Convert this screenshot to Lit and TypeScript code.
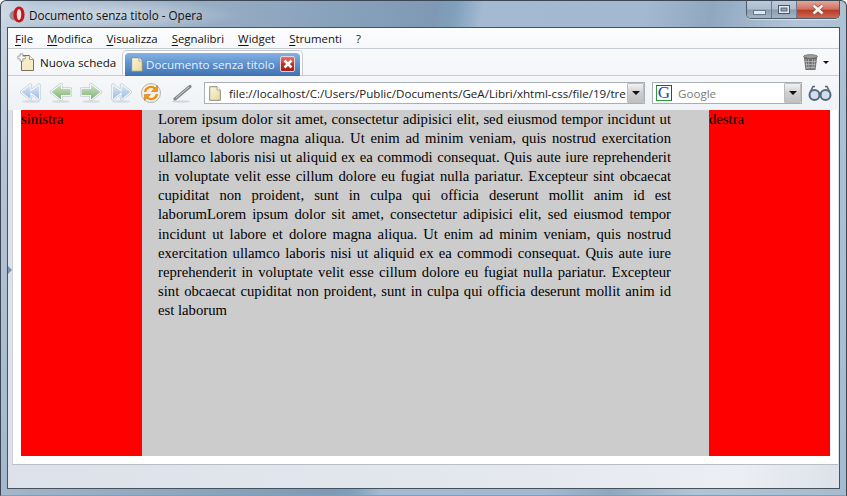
import { LitElement, html, css } from "lit";
import { customElement } from "lit/decorators.js";

const LINES = [
  "Lorem ipsum dolor sit amet, consectetur adipisici elit, sed eiusmod tempor incidunt ut",
  "labore et dolore magna aliqua. Ut enim ad minim veniam, quis nostrud exercitation",
  "ullamco laboris nisi ut aliquid ex ea commodi consequat. Quis aute iure reprehenderit",
  "in voluptate velit esse cillum dolore eu fugiat nulla pariatur. Excepteur sint obcaecat",
  "cupiditat non proident, sunt in culpa qui officia deserunt mollit anim id est",
  "laborumLorem ipsum dolor sit amet, consectetur adipisici elit, sed eiusmod tempor",
  "incidunt ut labore et dolore magna aliqua. Ut enim ad minim veniam, quis nostrud",
  "exercitation ullamco laboris nisi ut aliquid ex ea commodi consequat. Quis aute iure",
  "reprehenderit in voluptate velit esse cillum dolore eu fugiat nulla pariatur. Excepteur",
  "sint obcaecat cupiditat non proident, sunt in culpa qui officia deserunt mollit anim id",
];
const LAST = "est laborum";

const MENU: [string, string][] = [
  ["F", "ile"], ["M", "odifica"], ["V", "isualizza"], ["S", "egnalibri"], ["W", "idget"], ["S", "trumenti"], ["", "?"],
];

const page = (w = 12, h = 15) => html`<svg class="pg" width=${w} height=${h} viewBox="0 0 12 15" preserveAspectRatio="none">
  <defs><linearGradient id="pg" x1="0" y1="0" x2="1" y2="1"><stop offset="0" stop-color="#fbf5d9"/><stop offset="1" stop-color="#e6d9a4"/></linearGradient></defs>
  <path d="M.7.7h7.3l3.3 3.3v10.3H.7z" fill="url(#pg)" stroke="#8f8a76"/>
  <path d="M8 .7V4h3.3" fill="#fff" stroke="#a09a84" stroke-width=".8"/>
</svg>`;

const newTabIcon = html`<svg width="18" height="18" viewBox="0 0 18 18">
  <path d="M4.5 2.5h8l4 4v11h-12z" fill="#f5ecc6" stroke="#77735f"/>
  <path d="M12.5 2.5v4h4" fill="#fff" stroke="#8f8a76" stroke-width=".8"/>
  <path d="M.5 4.5h8M4.5.5v8" stroke="#8a8a8a" stroke-width="3.6"/>
  <path d="M1.2 4.5h6.6M4.5 1.2v6.6" stroke="#fff" stroke-width="2"/>
</svg>`;

const nav = (d: string, id: string, a: string, b: string) => html`<svg width="22" height="20" viewBox="0 0 22 20">
  <defs>
    <linearGradient id=${id} x1="0" y1="0" x2="0" y2="1"><stop offset="0" stop-color=${a}/><stop offset="1" stop-color=${b}/></linearGradient>
  </defs>
  <ellipse cx="11" cy="18.5" rx="9" ry="1.3" fill="#c8ccd2" opacity=".6"/>
  <path d=${d} fill="none" stroke="#c6ced6" stroke-width="3.4" stroke-linejoin="round"/>
  <path d=${d} fill="none" stroke="#fff" stroke-width="1.6" stroke-linejoin="round"/>
  <path d=${d} fill="url(#${id})"/>
</svg>`;

@customElement("app-root")
export class AppRoot extends LitElement {
  static styles = css`
    :host { display: block; width: 847px; height: 496px; overflow: hidden; font-family: "Open Sans", "Noto Sans", sans-serif; }
    .win { box-sizing: border-box; width: 847px; height: 496px; display: flex; flex-direction: column; padding: 0 6px 6px; border: 1px solid #3b4754; border-bottom-color: #4fb3c9; border-radius: 6px 6px 0 0;
      background:
        radial-gradient(ellipse 130px 16px at 110px 14px, #ffffff70, #ffffff00),
        linear-gradient(102deg, #cdd8e3 0, #b4c4d5 4%, #9fb3c8 14%, #8ea6bf 30%, #7f99b5 46%, #80a0bb 48%, #a4bad2 51%, #a3b9d1 68%, #8fa8c0 75%, #b2c5d7 84%, #a7bbcf 100%); }
    .title { height: 26px; flex: none; display: flex; }
    .opera { margin: 5px 0 0 2px; }
    .caption { font-size: 11.7px; line-height: 14px; margin: 7px 0 0 4px; color: #111; }
    .ctrls { margin-left: auto; display: flex; height: 17px; border: 1px solid #4c5a69; border-top: 0; border-radius: 0 0 5px 5px; overflow: hidden; box-shadow: 0 1px 0 #ffffff80; }
    .ctrl { width: 24px; display: flex; align-items: center; justify-content: center; background: linear-gradient(#bccadb 0, #adbdcd 48%, #8a9dae 52%, #a2b4c6 100%); border-right: 1px solid #6a7b8d; }
    .ctrl.close { width: 42px; border: 0; background: linear-gradient(#e3a79b 0, #d2705f 48%, #b93a28 54%, #cc6a52 100%); }
    .frame { flex: 1; display: flex; flex-direction: column; border: 1px solid #46535f; background: #fff; min-height: 0; }
    .menu { height: 19px; padding: 1px 0 0 7px; flex: none; display: flex; align-items: center; gap: 14px; font-size: 11.4px; line-height: 14px; color: #111; border-bottom: 1px solid #c6ccd4; background: linear-gradient(#fcfdfe, #f7f8fb); }
    .menu u { text-underline-offset: 2px; }
    .menu .item { white-space: nowrap; }
    .tabs { height: 26px; flex: none; display: flex; align-items: flex-end; padding-left: 9px; border-bottom: 1px solid #c6ccd4; background: linear-gradient(#f8f9fb, #f5f6f9); }
    .newtab { height: 26px; width: 105px; flex: none; display: flex; align-items: center; gap: 5px; font-size: 11.6px; color: #111; white-space: nowrap; }
    .tabframe { flex: none; box-sizing: border-box; height: 25px; padding: 2px 2px 0; background: #fff; border: 1px solid #c6ccd4; border-bottom: 0; border-radius: 5px 5px 0 0; }
    .tab { height: 23px; width: 175px; box-sizing: border-box; display: flex; align-items: center; gap: 3px; padding: 0 5px 1px 6px; font-size: 11.6px; color: #e6f0fb; border-radius: 4px 4px 0 0; background: linear-gradient(#86b2e4, #5f93d0 45%, #3e72b2); white-space: nowrap; }
    .x { margin-left: auto; box-sizing: border-box; width: 15px; height: 16px; border-radius: 2px; border: 1px solid #e8d4d4; background: linear-gradient(#ea7468, #c02a20 55%, #a71d16); display: flex; align-items: center; justify-content: center; }
    .trash { margin-left: auto; margin-right: 10px; display: flex; align-items: center; gap: 5px; align-self: center; }
    .tri { width: 0; height: 0; border: 3px solid transparent; border-top: 3px solid #111; border-bottom: 0; }
    .drop .tri { border-width: 4px 4px 0; border-top-color: #111; }
    .tools { height: 34px; flex: none; display: flex; align-items: center; padding-left: 12px; background: linear-gradient(#f5f7f9, #eff2f6); }
    .icons { display: flex; align-items: center; gap: 8px; width: 184px; flex: none; }
    .addr { width: 441px; height: 22px; box-sizing: border-box; flex: none; display: flex; align-items: center; border: 1px solid #a9afb7; background: #fff; padding-left: 4px; font-size: 11.6px; color: #222; overflow: hidden; white-space: nowrap; }
    .addr .pg { flex: none; margin-right: 8px; }
    .addr .txt { flex: 1; min-width: 0; }
    .drop { box-sizing: border-box; width: 17px; height: 20px; flex: none; display: flex; align-items: center; justify-content: center; background: linear-gradient(#f2f2f2, #cfcfcf 50%, #c0c0c0); border: 1px solid #bdbdbd; border-radius: 1px; }
    .search { margin-left: 7px; width: 150px; height: 22px; box-sizing: border-box; flex: none; display: flex; align-items: center; border: 1px solid #a9afb7; background: #fff; padding-left: 3px; gap: 6px; font-size: 11.6px; color: #7b7b7b; }
    .search .txt { flex: 1; }
    .g { width: 16px; height: 16px; box-sizing: border-box; border: 1px solid; border-color: #2a3fb5 #2a3fb5 #2a9a3a #2a9a3a; display: flex; align-items: center; justify-content: center; font: 17px/14px "Liberation Serif", serif; color: #1c3fc0; }
    .glasses { margin-left: 6px; }
    .page { flex: 1; min-height: 0; display: flex; flex-direction: column; padding: 0 1px 0 4px; background: linear-gradient(90deg, #dde2ea, #e2e6ed 50%, #ebeef2 88%, #dde2ea); position: relative; }
    .handle { position: absolute; left: 0; top: 156px; width: 0; height: 0; border: 4px solid transparent; border-left: 4px solid #7d94b3; border-right: 0; }
    .view { height: 355px; flex: none; box-sizing: border-box; background: #fff; padding: 0 8px 8px; border-bottom: 1px solid #b9bec6; border-left: 1px solid #cdd2d9; display: flex; }
    .side { width: 121px; flex: none; background: #f00; font: 14.7px/19px "Liberation Serif", serif; color: #000; }
    .main { flex: 1; background: #ccc; box-sizing: border-box; padding: 0 38px 0 16px; font: 14.7px/19.1px "Liberation Serif", serif; color: #000; }
    .line { text-align: justify; text-align-last: justify; }
  `;

  render() {
    return html`<div class="win">
      <div class="title">
        <svg class="opera" width="16" height="17" viewBox="0 0 16 17"><circle cx="5.5" cy="9.5" r="5" fill="#6f6f6f" opacity=".65"/><ellipse cx="10" cy="8.5" rx="5.6" ry="8" fill="#c8161d"/><ellipse cx="10" cy="8.5" rx="2.2" ry="5.6" fill="#f4e4e2"/></svg>
        <span class="caption">Documento senza titolo - Opera</span>
        <div class="ctrls">
          <div class="ctrl"><svg width="13" height="10" viewBox="0 0 13 10"><rect x=".5" y="5.5" width="12" height="4" fill="#e2e8ee" stroke="#66788a"/></svg></div>
          <div class="ctrl"><svg width="12" height="9" viewBox="0 0 12 9"><rect x=".5" y=".5" width="11" height="8" fill="#dfe6ec" stroke="#4c5a69"/><rect x="3" y="3" width="6" height="3" fill="#8fa2b4" stroke="#4c5a69" stroke-width=".8"/></svg></div>
          <div class="ctrl close"><svg width="14" height="11" viewBox="0 0 14 11"><path d="M2.5 1.5l9 8M11.5 1.5l-9 8" stroke="#7d4a40" stroke-width="4"/><path d="M2.5 1.5l9 8M11.5 1.5l-9 8" stroke="#f6f2ee" stroke-width="2.8"/></svg></div>
        </div>
      </div>
      <div class="frame">
        <div class="menu">
          ${MENU.map(([k, r]) => html`<span class="item">${k ? html`<u>${k}</u>` : ""}${r}</span>`)}
        </div>
        <div class="tabs">
          <div class="newtab">${newTabIcon}Nuova scheda</div>
          <div class="tabframe">
            <div class="tab">${page(12, 15)}Documento senza titolo<span class="x"><svg width="10" height="10" viewBox="0 0 10 10"><path d="M1.5 1.5l7 7M8.5 1.5l-7 7" stroke="#fff" stroke-width="2.6"/></svg></span></div>
          </div>
          <div class="trash">
            <svg width="15" height="17" viewBox="0 0 15 17"><path d="M.8 2.5h13.4L12.5 16h-10z" fill="#6f6f6f"/><path d="M3 5l1.2 10M5.5 5l.5 10M9.500 5L9 15M12 5l-1.200 10M2 7.500h11M2.500 10.500h10M3 13.500h9" stroke="#bdbdbd" stroke-width=".7"/><ellipse cx="7.500" cy="2.500" rx="7" ry="1.900" fill="#9e9e9e" stroke="#555" stroke-width=".6"/></svg>
            <span class="tri"></span>
          </div>
        </div>
        <div class="tools">
          <div class="icons">
            ${nav("M10 9L19 2v14zM1.500 9L10.500 2v14z", "gb", "#dbe7f6", "#9dbde6")}
            ${nav("M1.500 9L11 1.500V6h9.500v6H11v4.500z", "gl", "#cfe6c2", "#7fb174")}
            ${nav("M20.500 9L11 1.500V6H1.500v6H11v4.500z", "gr", "#cfe6c2", "#7fb174")}
            ${nav("M12 9L3 2v14zM20.500 9L11.500 2v14z", "gf", "#dbe7f6", "#9dbde6")}
            <svg width="22" height="22" viewBox="0 0 22 22">
              <circle cx="11" cy="11" r="9.500" fill="#f1efea" stroke="#b8b4aa"/>
              <path d="M5 10a6 6 0 0 1 10-3.500" fill="none" stroke="#ec9016" stroke-width="2.200"/>
              <path d="M17 12a6 6 0 0 1-10 3.500" fill="none" stroke="#ec9016" stroke-width="2.200"/>
              <path d="M17.500 3.500v6h-6z" fill="#f29c1f" stroke="#b96a08" stroke-width=".5"/>
              <path d="M4.500 18.500v-6h6z" fill="#f29c1f" stroke="#b96a08" stroke-width=".5"/>
            </svg>
            <svg width="22" height="20" viewBox="0 0 22 20"><ellipse cx="11" cy="18.500" rx="9" ry="1" fill="#d0d3d8"/><path d="M5 16L20 3.500" stroke="#85888d" stroke-width="3.200" stroke-linecap="round"/><path d="M6 15L19 4" stroke="#c8cbcf" stroke-width="1"/></svg>
          </div>
          <div class="addr">${page(12, 15)}<span class="txt">file://localhost/C:/Users/Public/Documents/GeA/Libri/xhtml-css/file/19/tre</span><span class="drop"><span class="tri"></span></span></div>
          <div class="search"><span class="g">G</span><span class="txt">Google</span><span class="drop"><span class="tri"></span></span></div>
          <svg class="glasses" width="24" height="18" viewBox="0 0 24 18"><circle cx="6.500" cy="11" r="5" fill="#d3deeb" stroke="#54687e" stroke-width="2"/><circle cx="17.500" cy="11" r="5" fill="#d3deeb" stroke="#54687e" stroke-width="2"/><path d="M10.500 9.500h3M2 8.500l3-6h2M22 8.500l-3-6h-2" stroke="#54687e" stroke-width="1.600" fill="none"/></svg>
        </div>
        <div class="page">
          <span class="handle"></span>
          <div class="view">
            <div class="side">sinistra</div>
            <div class="main">
              ${LINES.map((l) => html`<div class="line">${l}</div>`)}
              <div>${LAST}</div>
            </div>
            <div class="side">destra</div>
          </div>
        </div>
      </div>
    </div>`;
  }
}
